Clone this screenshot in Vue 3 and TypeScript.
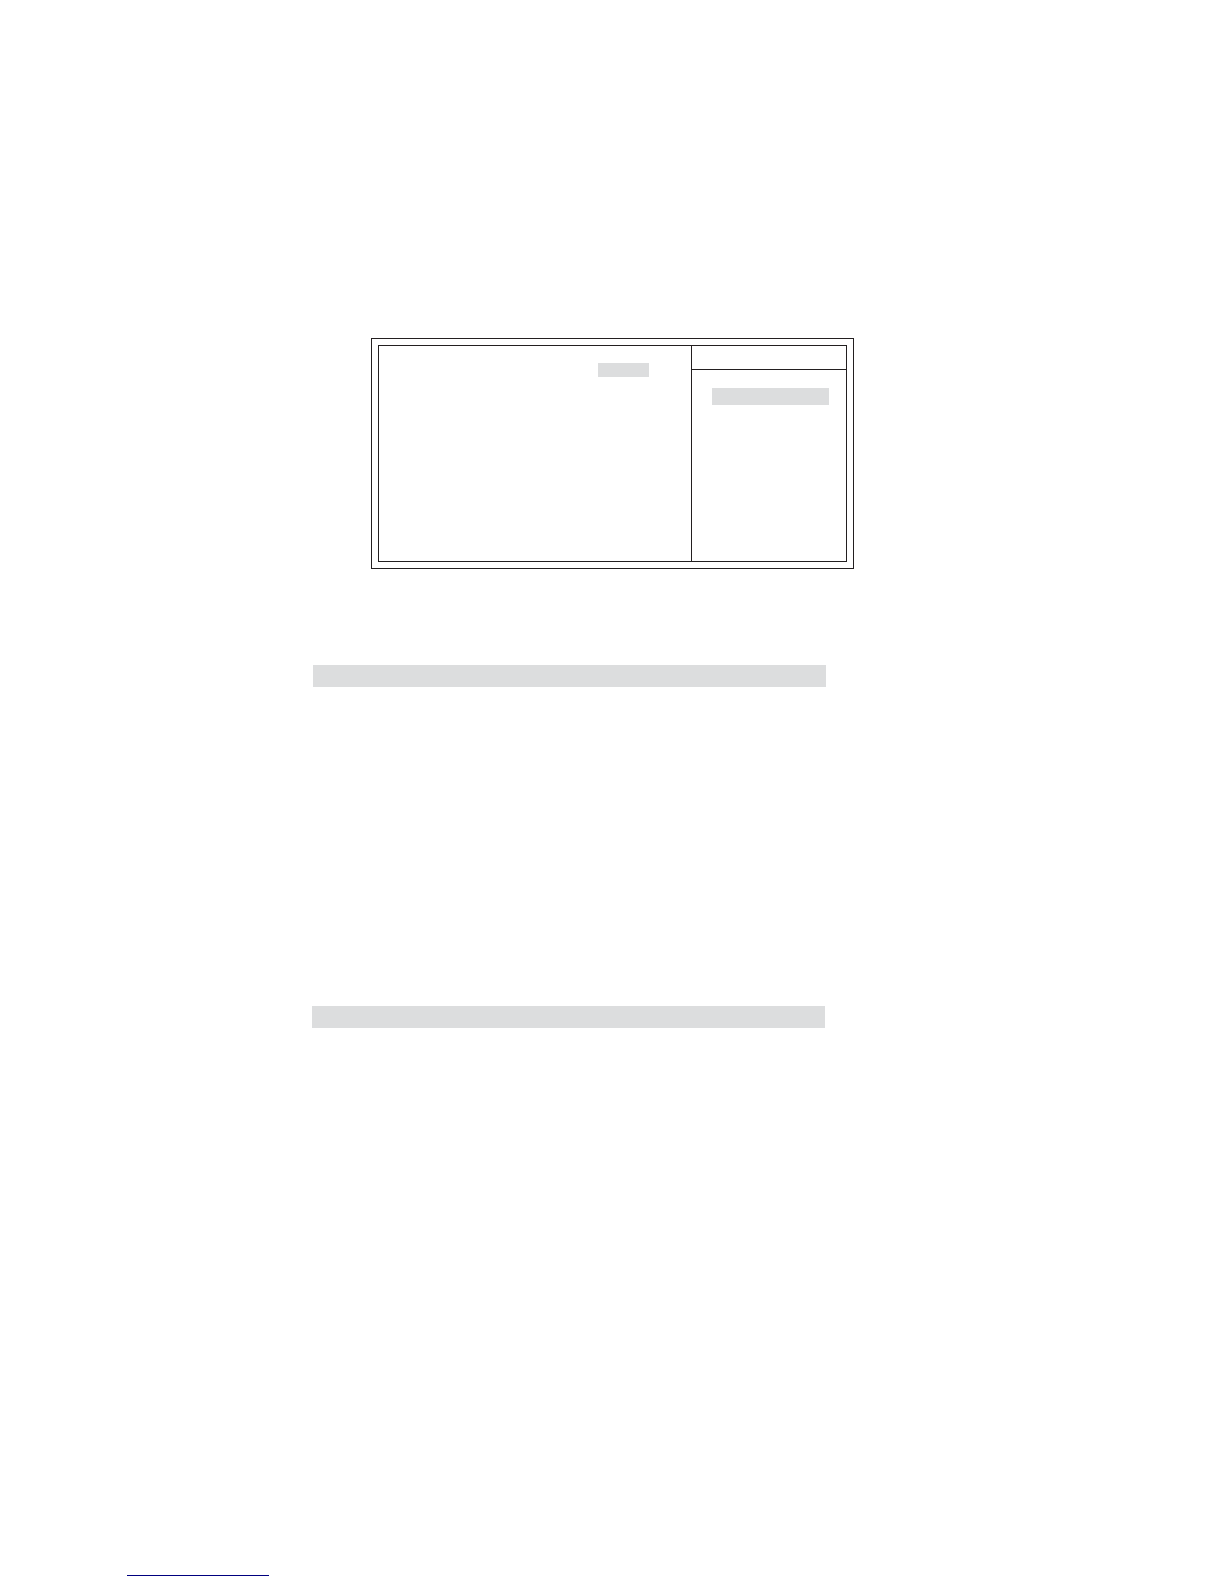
<script setup lang="ts">
</script>

<template>
  <main class="page">
    <section class="screen row">
      <div class="frame">
        <div class="options"><div class="value"></div></div>
        <aside class="help">
          <div class="help-head"></div>
          <div class="help-body"><div class="level"></div></div>
        </aside>
      </div>
    </section>
    <div class="row band first"><div class="fill"></div></div>
    <div class="row band second"><div class="fill"></div></div>
    <footer class="row foot"><div class="rule"></div></footer>
  </main>
</template>

<style>
body {
  background: #fff;
}
</style>

<style scoped>
.page {
  display: flex;
  flex-direction: column;
  padding: 338px 0 8px;
  --line: #231f20;
  --gray: #dcddde;
}
.row {
  display: grid;
}
.row > * {
  grid-column: 2;
}
.screen {
  grid-template-columns: 371fr 483fr 370fr;
}
.frame {
  box-sizing: border-box;
  min-height: 231px;
  border: 1px solid var(--line);
  padding: 6px;
  display: grid;
  grid-template-columns: 313fr 156fr;
}
.options {
  border: 1px solid var(--line);
  border-right: 0;
  padding: 17px 42px 0 0;
}
.value {
  width: 51px;
  height: 14px;
  margin-left: auto;
  background: var(--gray);
}
.help {
  display: flex;
  flex-direction: column;
  border: 1px solid var(--line);
}
.help-head {
  height: 23px;
  border-bottom: 1px solid var(--line);
}
.help-body {
  flex: 1;
  padding: 18px 17px 0 20px;
}
.level {
  height: 17px;
  background: var(--gray);
}
.first {
  margin-top: 96px;
  grid-template-columns: 313fr 513fr 398fr;
}
.second {
  margin-top: 319px;
  grid-template-columns: 312fr 513fr 399fr;
}
.fill {
  height: 22px;
  background: var(--gray);
}
.foot {
  margin-top: 547px;
  grid-template-columns: 127fr 142fr 955fr;
}
.rule {
  height: 1px;
  background: #00007f;
}
</style>
